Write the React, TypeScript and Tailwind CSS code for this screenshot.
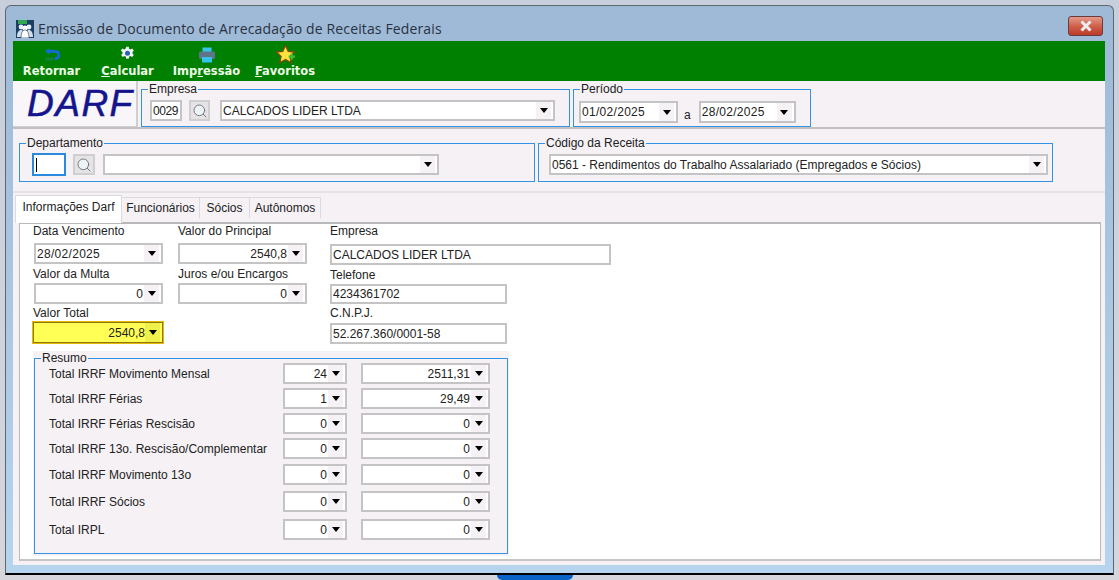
import { Search } from 'lucide-react';

const LAVENDER = 'bg-[#f5f1f5]';

type FieldProps = {
  value?: string;
  right?: boolean;
  arrow?: boolean;
  className?: string;
};

function Arrow({ bg = 'bg-[#f5f1f5]' }: { bg?: string }) {
  return (
    <span className={`flex h-full w-[15px] shrink-0 items-center justify-center ${bg}`}>
      <span className="h-0 w-0 border-x-[4px] border-t-[5px] border-x-transparent border-t-black" />
    </span>
  );
}

function Field({ value = '', right, arrow, className = '' }: FieldProps) {
  return (
    <div className={`flex shrink-0 items-center border-2 border-[#c4c4c4] bg-white ${className}`}>
      <span className={`min-w-0 flex-1 truncate px-[1px] text-[#222] ${right ? 'text-right' : ''}`}>{value}</span>
      {arrow && <Arrow />}
    </div>
  );
}

function SearchButton({ className = '' }: { className?: string }) {
  return (
    <div className={`flex shrink-0 items-center justify-center border-2 border-[#cfcfcf] bg-[#e6e3e6] ${className}`}>
      <Search size={16} strokeWidth={1.4} className="fill-[#eef3f6] text-[#6b7278]" />
    </div>
  );
}

function Group({ title, className = '', children }: { title: string; className?: string; children: React.ReactNode }) {
  return (
    <div className={`relative shrink-0 border border-[#3492e2] ${className}`}>
      <span className={`absolute -top-[8px] left-[6px] px-[1px] leading-[14px] text-[#222] ${LAVENDER}`}>{title}</span>
      {children}
    </div>
  );
}

function Label({ text, className = '' }: { text: string; className?: string }) {
  return <div className={`h-[14px] leading-[14px] text-[#222] ${className}`}>{text}</div>;
}

function ReturnIcon() {
  return (
    <svg width="18" height="17" viewBox="0 0 20 18">
      <path d="M7 2 L2 5.5 L7 9 V7 H13 Q16 7 16 9.5 Q16 12 13 12 V15 Q19 15 19 9.5 Q19 4 13 4 H7 Z" fill="#1769d8" />
      <path d="M3 13h9M3 15h9" stroke="#3d7fc0" strokeWidth="1" strokeDasharray="1.2 1" />
    </svg>
  );
}

function GearIcon() {
  return (
    <svg width="15" height="15" viewBox="0 0 18 18">
      <path
        d="M7.5 1h3l.4 2.4 1.7.8 2-1.2 2 2.4-1.6 1.7v2l1.6 1.7-2 2.4-2-1.2-1.7.8-.4 2.4h-3l-.4-2.4-1.7-.8-2 1.2-2-2.4 1.6-1.7v-2L.9 5.4l2-2.4 2 1.2 1.7-.8z"
        fill="#f2f6fb"
      />
      <circle cx="9" cy="8.6" r="3" fill="#2a62b8" />
    </svg>
  );
}

function PrinterIcon() {
  return (
    <svg width="18" height="18" viewBox="0 0 18 18">
      <rect x="4.5" y="1.5" width="9" height="5" fill="#39c6ee" />
      <rect x="1" y="5.5" width="16" height="7.5" rx="1" fill="#5f7486" />
      <rect x="4" y="11" width="10" height="5.5" fill="#35c3ec" />
    </svg>
  );
}

function StarIcon() {
  return (
    <svg width="21" height="21" viewBox="0 0 20 20">
      <path
        d="M10 1.5 L12.6 7 L18.6 7.7 L14.2 11.8 L15.4 17.8 L10 14.8 L4.6 17.8 L5.8 11.8 L1.4 7.7 L7.4 7 Z"
        fill="#ffe23a"
        stroke="#7d4a08"
        strokeWidth="1.2"
      />
      <path d="M13 11h2v-2h2v2h2v2h-2v2h-2v-2h-2z" fill="#3fbf3a" />
    </svg>
  );
}

function AppIcon() {
  return (
    <svg width="18" height="18" viewBox="0 0 18 18" className="shrink-0">
      <rect width="18" height="18" fill="#1c3f66" />
      <rect x="2" y="0" width="9" height="4" fill="#2fa84f" />
      <circle cx="5" cy="7" r="2.4" fill="#e8eef4" />
      <circle cx="13" cy="7" r="2.4" fill="#e8eef4" />
      <circle cx="9" cy="8" r="2.6" fill="#ffffff" />
      <path d="M1 17c0-5 2-7 4-7s4 2 4 7zM9 17c0-5 2-7 4-7s4 2 4 7z" fill="#d3dee8" />
      <path d="M5 18c0-6 2-8 4-8s4 2 4 8z" fill="#ffffff" stroke="#1c3f66" strokeWidth="0.6" />
    </svg>
  );
}

const resumo = [
  { label: 'Total IRRF Movimento Mensal', qtd: '24', valor: '2511,31', mt: 'mt-[4px]' },
  { label: 'Total IRRF Férias', qtd: '1', valor: '29,49', mt: 'mt-[4px]' },
  { label: 'Total IRRF Férias Rescisão', qtd: '0', valor: '0', mt: 'mt-[4px]' },
  { label: 'Total IRRF 13o. Rescisão/Complementar', qtd: '0', valor: '0', mt: 'mt-[4px]' },
  { label: 'Total IRRF Movimento 13o', qtd: '0', valor: '0', mt: 'mt-[5px]' },
  { label: 'Total IRRF Sócios', qtd: '0', valor: '0', mt: 'mt-[6px]' },
  { label: 'Total IRPL', qtd: '0', valor: '0', mt: 'mt-[7px]' },
];

export default function App() {
  return (
    <div className="h-[580px] w-[1119px] overflow-hidden bg-gradient-to-b from-[#c6cfdb] to-[#d6d6dc] pl-[5px] pt-[5px] font-['Liberation_Sans',sans-serif] text-[12px]">
      {/* janela */}
      <div className="flex h-[570px] w-[1109px] flex-col rounded-t-[6px] border border-b-2 border-[#5e6670] border-b-black bg-gradient-to-b from-[#9db9d6] to-[#b7d4ee] px-[7px]">
        <div className="flex h-[35px] shrink-0 items-center pl-[3px] pt-[10px]">
          <AppIcon />
          <span className="ml-[4px] font-['Open_Sans',sans-serif] text-[14px] tracking-[0.13px] text-[#2a3242]">
            Emissão de Documento de Arrecadação de Receitas Federais
          </span>
          <button className="mb-[6px] ml-auto mr-[3px] flex h-[20px] w-[35px] items-center justify-center rounded-[3px] border border-[#6b3a3a] bg-gradient-to-b from-[#e29a8c] via-[#d0604c] to-[#bb3a28]">
            <svg width="14" height="12" viewBox="0 0 14 12">
              <path d="M2.5 1.5 L11.5 10.5 M11.5 1.5 L2.5 10.5" stroke="#eeeeee" strokeWidth="3" />
            </svg>
          </button>
        </div>

        {/* barra de botões */}
        <div className="flex h-[40px] w-[1092px] shrink-0 bg-[#008000] font-['DejaVu_Sans',sans-serif] text-[11.5px] font-bold text-[#eefbe6]">
          <div className="ml-[10px] flex w-[57px] flex-col items-center">
            <span className="flex h-[23px] items-center pt-[4px]"><ReturnIcon /></span>
            <span className="leading-[15px]">Retornar</span>
          </div>
          <div className="ml-[22px] flex w-[51px] flex-col items-center">
            <span className="flex h-[23px] items-center pt-[2px]"><GearIcon /></span>
            <span className="leading-[15px]"><u>C</u>alcular</span>
          </div>
          <div className="ml-[19px] flex w-[69px] flex-col items-center">
            <span className="flex h-[23px] items-center pt-[4px]"><PrinterIcon /></span>
            <span className="leading-[15px]">Imp<u>r</u>essão</span>
          </div>
          <div className="ml-[14px] flex w-[60px] flex-col items-center">
            <span className="flex h-[23px] items-center pt-[3px]"><StarIcon /></span>
            <span className="leading-[15px]"><u>F</u>avoritos</span>
          </div>
        </div>

        {/* corpo */}
        <div className={`h-[484px] w-[1092px] shrink-0 ${LAVENDER}`}>
          {/* empresa e período */}
          <div className="flex h-[48px] border-b-2 border-[#c2c0c2]">
            <div className="flex h-[46px] w-[125px] shrink-0 items-center border-b border-r-2 border-[#d0ced0] bg-[#f8f6f8] pl-[14px]">
              <span className="text-[37px] italic leading-none tracking-[1.5px] text-[#14148c] [-webkit-text-stroke:0.5px_#14148c]">
                DARF
              </span>
            </div>
            <Group title="Empresa" className="ml-[3px] mt-[8px] flex h-[38px] w-[429px] items-start pl-[8px] pt-[10px]">
              <Field value="0029" className="h-[21px] w-[32px] tracking-[-0.4px]" />
              <SearchButton className="ml-[7px] h-[21px] w-[21px]" />
              <Field value="CALCADOS LIDER LTDA" arrow className="ml-[10px] h-[21px] w-[335px] pr-[2px]" />
            </Group>
            <Group title="Período" className="ml-[3px] mt-[8px] flex h-[38px] w-[238px] items-start pl-[5px] pt-[11px]">
              <Field value="01/02/2025" arrow className="h-[22px] w-[99px] pr-[2px] tracking-[0.3px]" />
              <span className="mx-[6px] pt-[5px] text-[#222]">a</span>
              <Field value="28/02/2025" arrow className="ml-[2px] h-[22px] w-[97px] pr-[2px] tracking-[0.3px]" />
            </Group>
          </div>

          {/* departamento e receita */}
          <div className="flex h-[64px] border-b-2 border-[#e4e2e4] pl-[6px] pt-[14px]">
            <Group title="Departamento" className="flex h-[39px] w-[516px] items-start pl-[12px] pt-[9px]">
              <div className="h-[23px] w-[34px] shrink-0 border-2 border-[#2b8ade] bg-white pl-[2px] pt-[3px]">
                <div className="h-[14px] w-[1px] bg-black" />
              </div>
              <SearchButton className="ml-[7px] mt-[1px] h-[21px] w-[22px]" />
              <Field arrow className="ml-[8px] mt-[1px] h-[21px] w-[336px] pr-[2px]" />
            </Group>
            <Group title="Código da Receita" className="ml-[3px] flex h-[39px] w-[515px] items-start pl-[10px] pt-[10px]">
              <Field
                value="0561 - Rendimentos do Trabalho Assalariado (Empregados e Sócios)"
                arrow
                className="h-[21px] w-[499px] pr-[2px]"
              />
            </Group>
          </div>

          {/* abas */}
          <div className="flex h-[29px] items-end pl-[2px] text-[#222]">
            <div className="relative mb-[-1px] flex h-[28px] w-[107px] items-center justify-center border-x border-t border-[#dcdadc] bg-white pb-[5px]">
              Informações Darf
            </div>
            <div className="mb-[4px] flex h-[21px] w-[78px] items-center justify-center border-r border-t border-[#dcdadc]">Funcionários</div>
            <div className="mb-[4px] flex h-[21px] w-[50px] items-center justify-center border-r border-t border-[#dcdadc]">Sócios</div>
            <div className="mb-[4px] flex h-[21px] w-[71px] items-center justify-center border-r border-t border-[#dcdadc]">Autônomos</div>
          </div>

          {/* conteúdo da aba */}
          <div className="ml-[6px] h-[339px] w-[1082px] border-x border-b-2 border-t-2 border-[#b9b9b9] border-b-[#c6c6c6] bg-white pl-[13px]">
            <div className="flex h-[127px]">
              <div className="w-[145px] shrink-0">
                <Label text="Data Vencimento" />
                <Field value="28/02/2025" arrow className="ml-[1px] mt-[5px] h-[21px] w-[129px] pr-[2px] tracking-[0.3px]" />
                <Label text="Valor da Multa" className="mt-[3px]" />
                <Field value="0" right arrow className="ml-[1px] mt-[2px] h-[21px] w-[129px] pr-[2px]" />
                <Label text="Valor Total" className="mt-[2px]" />
                <div className="-ml-[1px] mt-[1px] flex h-[23px] w-[132px] items-center border-2 border-[#e6b800] bg-[#ffff55] pr-[2px] outline outline-1 -outline-offset-2 outline-[#8a7a10]">
                  <span className="flex-1 text-right text-[#222]">2540,8</span>
                  <Arrow bg="bg-[#f0f04c]" />
                </div>
              </div>
              <div className="w-[152px] shrink-0">
                <Label text="Valor do Principal" />
                <Field value="2540,8" right arrow className="mt-[5px] h-[21px] w-[129px] pr-[2px]" />
                <Label text="Juros e/ou Encargos" className="mt-[3px]" />
                <Field value="0" right arrow className="mt-[2px] h-[21px] w-[129px] pr-[2px]" />
              </div>
              <div className="flex-1">
                <Label text="Empresa" />
                <Field value="CALCADOS LIDER LTDA" className="mt-[6px] h-[21px] w-[281px]" />
                <Label text="Telefone" className="mt-[3px]" />
                <Field value="4234361702" className="mt-[2px] h-[20px] w-[177px]" />
                <Label text="C.N.P.J." className="mt-[2px]" />
                <Field value="52.267.360/0001-58" className="mt-[3px] h-[21px] w-[177px]" />
              </div>
            </div>

            {/* resumo */}
            <div className={`h-[205px] w-[476px] pl-[1px] pt-[7px] ${LAVENDER}`}>
              <Group title="Resumo" className="h-[196px] w-[474px] pl-[14px]">
                {resumo.map((row) => (
                  <div key={row.label} className={`flex h-[21px] items-center ${row.mt}`}>
                    <span className="w-[234px] shrink-0 whitespace-nowrap text-[#222]">{row.label}</span>
                    <Field value={row.qtd} right arrow className="h-[21px] w-[64px] pr-[2px]" />
                    <Field value={row.valor} right arrow className="ml-[14px] h-[21px] w-[129px] pr-[2px]" />
                  </div>
                ))}
              </Group>
            </div>
          </div>
        </div>
      </div>

      {/* pedaço da barra de tarefas */}
      <div className="ml-[492px] h-[5px] w-[76px] rounded-b-[6px] bg-[#0a64c8]" />
    </div>
  );
}
